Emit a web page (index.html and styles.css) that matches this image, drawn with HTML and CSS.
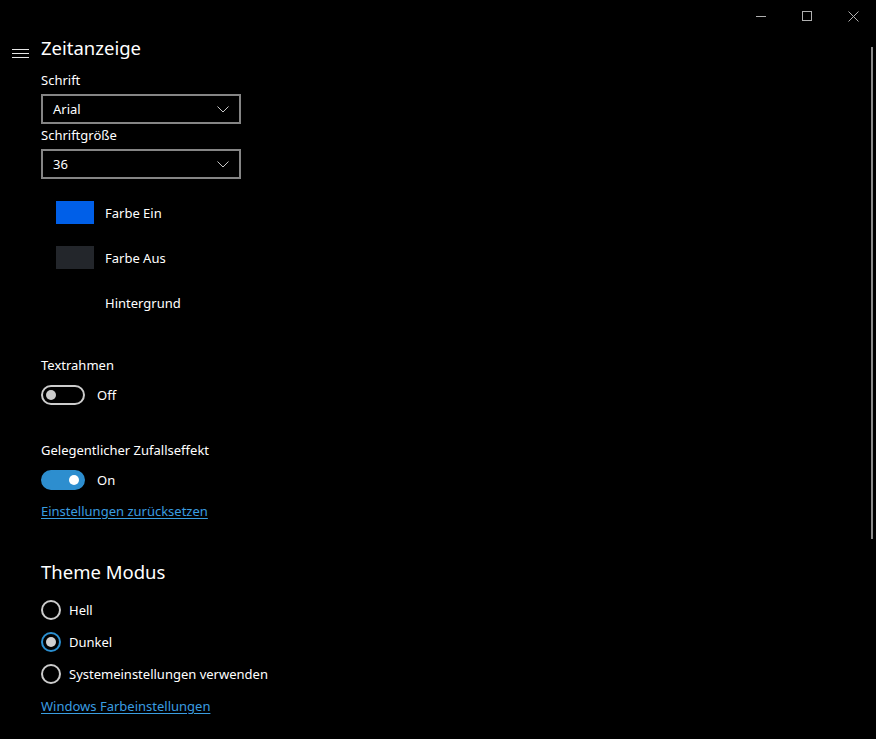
FILE: index.html
```html
<!DOCTYPE html>
<html lang="de">
<head>
<meta charset="utf-8">
<title>Zeitanzeige</title>
<link rel="stylesheet" href="styles.css">
</head>
<body>
<div class="window">
  <div class="titlebar">
    <div class="caption-btn">
      <svg width="10" height="10" viewBox="0 0 10 10"><path d="M0 5.5H10" stroke="#b0b0b0" stroke-width="1"/></svg>
    </div>
    <div class="caption-btn">
      <svg width="10" height="10" viewBox="0 0 10 10"><rect x="0.5" y="0.5" width="9" height="9" fill="none" stroke="#b0b0b0" stroke-width="1"/></svg>
    </div>
    <div class="caption-btn">
      <svg width="11" height="11" viewBox="0 0 11 11"><path d="M0.5 0.5L10.5 10.5M10.5 0.5L0.5 10.5" stroke="#b0b0b0" stroke-width="1"/></svg>
    </div>
  </div>
  <div class="scrollbar"></div>
  <div class="header">
    <div class="hamburger">
      <svg width="17" height="9" viewBox="0 0 17 9"><path d="M0 0.5H17M0 4.5H17M0 8.5H17" stroke="#e6e6e6" stroke-width="1"/></svg>
    </div>
    <h1 class="title">Zeitanzeige</h1>
  </div>
  <div class="content">
    <div class="label first">Schrift</div>
    <div class="combo"><span>Arial</span>
      <svg class="chev" width="12" height="7" viewBox="0 0 12 7"><path d="M0.5 0.5L6 6L11.5 0.5" fill="none" stroke="#c8c8c8" stroke-width="1"/></svg>
    </div>
    <div class="label tight">Schriftgröße</div>
    <div class="combo"><span>36</span>
      <svg class="chev" width="12" height="7" viewBox="0 0 12 7"><path d="M0.5 0.5L6 6L11.5 0.5" fill="none" stroke="#c8c8c8" stroke-width="1"/></svg>
    </div>
    <div class="colors">
      <div class="color-row"><span class="swatch on"></span><span>Farbe Ein</span></div>
      <div class="color-row"><span class="swatch off"></span><span>Farbe Aus</span></div>
      <div class="color-row"><span class="swatch bg"></span><span>Hintergrund</span></div>
    </div>
    <div class="label sect">Textrahmen</div>
    <div class="toggle-row"><span class="toggle"><span class="knob"></span></span><span>Off</span></div>
    <div class="label sect2">Gelegentlicher Zufallseffekt</div>
    <div class="toggle-row"><span class="toggle is-on"><span class="knob"></span></span><span>On</span></div>
    <a class="link reset" href="#">Einstellungen zurücksetzen</a>
    <h2 class="subtitle">Theme Modus</h2>
    <div class="radios">
      <div class="radio-row"><span class="radio"></span><span>Hell</span></div>
      <div class="radio-row"><span class="radio checked"></span><span>Dunkel</span></div>
      <div class="radio-row"><span class="radio"></span><span>Systemeinstellungen verwenden</span></div>
    </div>
    <a class="link colors-link" href="#">Windows Farbeinstellungen</a>
  </div>
</div>
</body>
</html>
```
FILE: styles.css
```css
* { box-sizing: border-box; }
html, body { margin: 0; padding: 0; background: #000; }
body {
  font-family: "Noto Sans", "Open Sans", sans-serif;
  font-size: 13px;
  color: #fff;
}
.window {
  position: relative;
  width: 876px;
  height: 739px;
  overflow: hidden;
  background: #000;
}
.titlebar {
  height: 32px;
  display: flex;
  justify-content: flex-end;
}
.caption-btn {
  width: 46px;
  height: 32px;
  display: flex;
  align-items: center;
  justify-content: center;
}
.scrollbar {
  position: absolute;
  right: 3px;
  top: 47px;
  width: 2px;
  height: 492px;
  background: #8a8a8a;
}
.header {
  height: 32px;
  display: flex;
  align-items: center;
}
.hamburger {
  width: 41px;
  padding-left: 12px;
  display: flex;
  align-items: center;
  height: 32px;
  padding-top: 11px;
}
.hamburger svg { display: block; }
.title {
  margin: 0;
  font-size: 18.5px;
  font-weight: 400;
  line-height: 28px;
}
.content {
  padding-left: 41px;
}
.label {
  height: 20px;
  line-height: 20px;
}
.label.first { margin-top: 6px; }
.label.tight { margin-top: 1px; }
.combo {
  margin-top: 4px;
  width: 200px;
  height: 30px;
  border: 2px solid #858585;
  display: flex;
  align-items: center;
  justify-content: space-between;
  padding: 0 10px 0 10px;
}
.combo span { line-height: 20px; }
.colors {
  margin-top: 11px;
  padding-left: 15px;
}
.color-row {
  height: 45px;
  display: flex;
  align-items: center;
  gap: 11px;
}
.swatch {
  width: 38px;
  height: 23px;
}
.swatch.on { background: #005fe8; }
.swatch.off { background: #23262b; }
.swatch.bg { background: #000; }
.label.sect { margin-top: 30px; }
.label.sect2 { margin-top: 35px; }
.toggle-row {
  margin-top: 10px;
  height: 20px;
  display: flex;
  align-items: center;
  gap: 12px;
}
.toggle {
  position: relative;
  width: 44px;
  height: 20px;
  border: 2px solid #cccccc;
  border-radius: 10px;
}
.toggle .knob {
  position: absolute;
  top: 3px;
  left: 3px;
  width: 10px;
  height: 10px;
  border-radius: 50%;
  background: #cccccc;
}
.toggle.is-on {
  background: #2d8ecf;
  border-color: #2d8ecf;
}
.toggle.is-on .knob {
  left: auto;
  right: 4px;
  background: #fff;
}
.link {
  display: block;
  width: max-content;
  height: 20px;
  line-height: 20px;
  color: #3a9de0;
  text-decoration: underline;
  text-underline-offset: 2px;
}
.link.reset { margin-top: 11px; }
.subtitle {
  margin: 37px 0 0;
  height: 28px;
  line-height: 28px;
  font-size: 18.5px;
  font-weight: 400;
}
.radios {
  margin-top: 14px;
  display: flex;
  flex-direction: column;
  gap: 12px;
}
.radio-row {
  height: 20px;
  display: flex;
  align-items: center;
  gap: 8px;
}
.radio {
  width: 20px;
  height: 20px;
  border: 2px solid #cccccc;
  border-radius: 50%;
  display: flex;
  align-items: center;
  justify-content: center;
}
.radio.checked { border-color: #2b8fd0; }
.radio.checked::after {
  content: "";
  width: 10px;
  height: 10px;
  border-radius: 50%;
  background: #d0d0d0;
}
.link.colors-link { margin-top: 12px; }
```
